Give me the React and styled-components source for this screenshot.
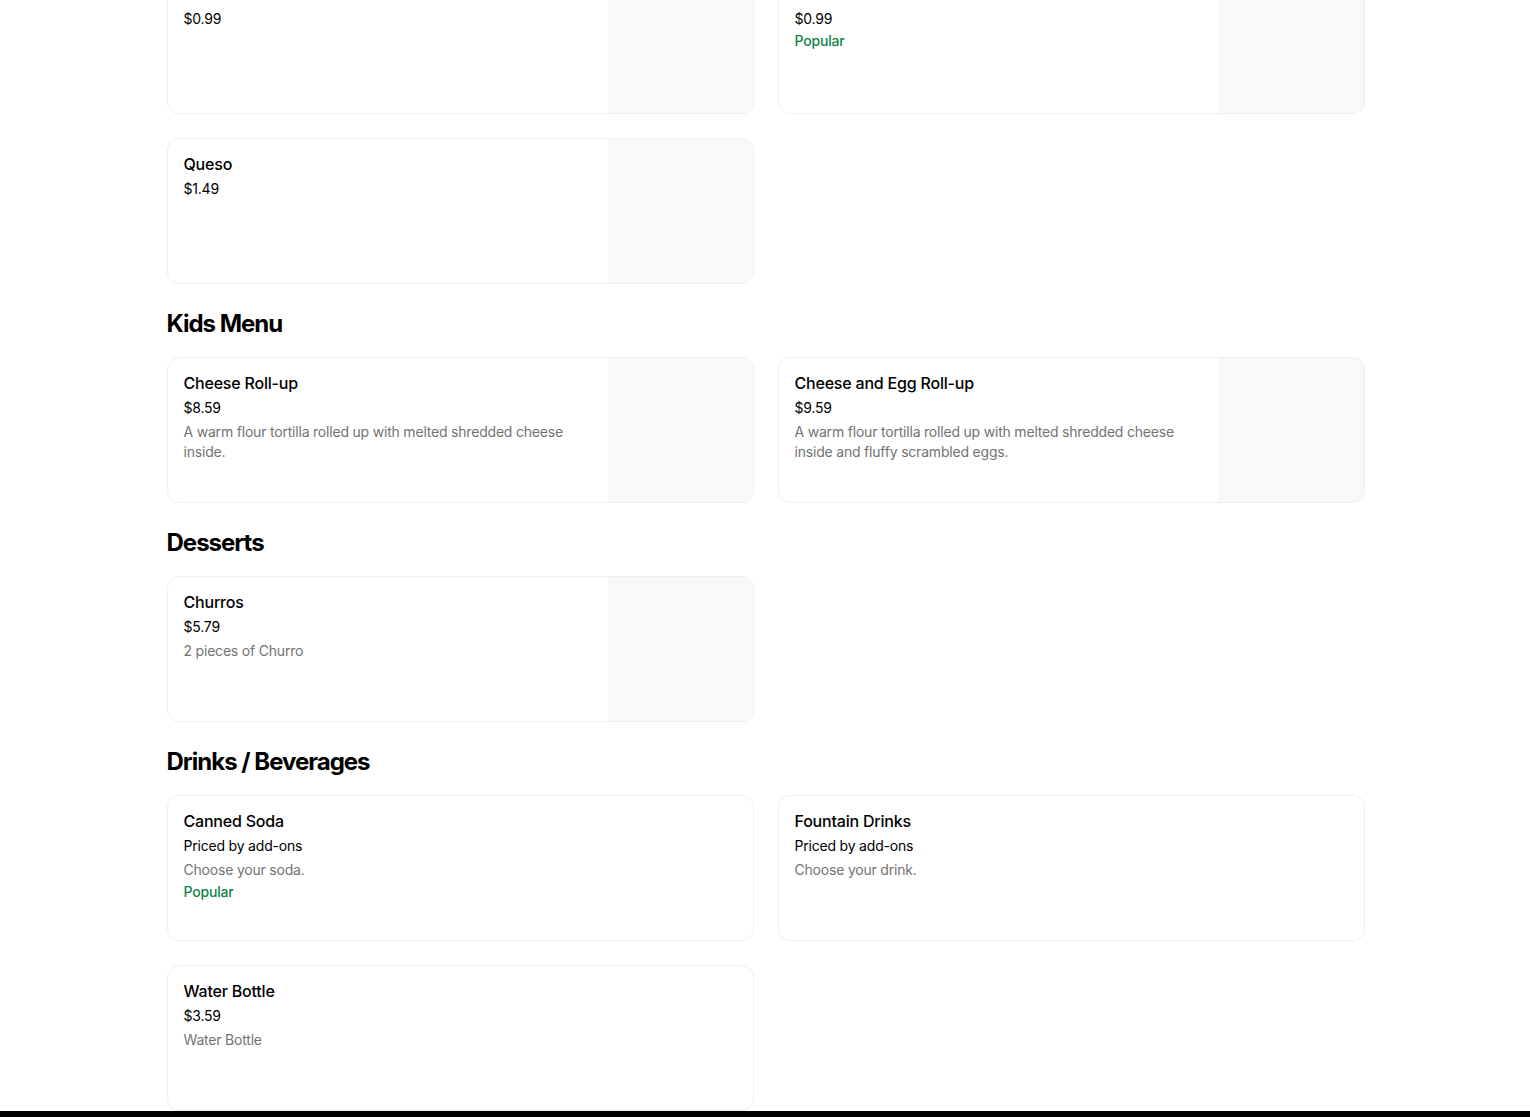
import React from "react";
import styled, { createGlobalStyle } from "styled-components";

const GlobalStyle = createGlobalStyle`
  * { box-sizing: border-box; }
  body {
    margin: 0;
    background: #ffffff;
    font-family: "Inter", "Liberation Sans", sans-serif;
    color: #000000;
    overflow: hidden;
  }
`;

const Page = styled.main`
  width: 1199px;
  padding-left: 1px;
  margin: -32px auto 0;
`;

const Section = styled.section`
  margin-bottom: 24px;

  &:last-child {
    margin-bottom: 0;
  }
`;

const SectionTitle = styled.h2`
  margin: 0 0 17px;
  font-size: 24px;
  line-height: 32px;
  font-weight: 700;
  letter-spacing: -1px;
  color: #000;
`;

const Grid = styled.div`
  display: grid;
  grid-template-columns: repeat(2, 1fr);
  gap: 24px;
`;

const Card = styled.div`
  display: flex;
  height: 146px;
  border: 1px solid #efefef;
  border-radius: 12px;
  overflow: hidden;
  background: #fff;
`;

const Info = styled.div`
  flex: 1;
  display: flex;
  flex-direction: column;
  gap: 4px;
  padding: 14px 16px 16px 16px;
  min-width: 0;
`;

const Name = styled.div`
  font-size: 16px;
  line-height: 22px;
  font-weight: 500;
  letter-spacing: -0.2px;
  color: #000;
`;

const Price = styled.div`
  font-size: 14px;
  line-height: 20px;
  letter-spacing: -0.2px;
  color: #000;
`;

const Desc = styled.div`
  font-size: 14px;
  line-height: 20px;
  letter-spacing: -0.2px;
  color: #737373;
  padding-right: 12px;
`;

const Badge = styled.div`
  margin-top: -2px;
  font-size: 14px;
  line-height: 20px;
  font-weight: 500;
  letter-spacing: -0.2px;
  color: #0e8345;
`;

const Thumb = styled.div`
  width: 145px;
  flex-shrink: 0;
  background: #f8f8f8;
`;

const Footer = styled.footer`
  height: 120px;
  background: #000;
`;

const sections = [
  {
    title: null,
    items: [
      { name: "Side of Salsa", price: "$0.99", image: true },
      { name: "Sour Cream", price: "$0.99", popular: true, image: true },
      { name: "Queso", price: "$1.49", image: true },
    ],
  },
  {
    title: "Kids Menu",
    items: [
      {
        name: "Cheese Roll-up",
        price: "$8.59",
        desc: "A warm flour tortilla rolled up with melted shredded cheese inside.",
        image: true,
      },
      {
        name: "Cheese and Egg Roll-up",
        price: "$9.59",
        desc: "A warm flour tortilla rolled up with melted shredded cheese inside and fluffy scrambled eggs.",
        image: true,
      },
    ],
  },
  {
    title: "Desserts",
    items: [
      { name: "Churros", price: "$5.79", desc: "2 pieces of Churro", image: true },
    ],
  },
  {
    title: "Drinks / Beverages",
    items: [
      {
        name: "Canned Soda",
        price: "Priced by add-ons",
        desc: "Choose your soda.",
        popular: true,
      },
      {
        name: "Fountain Drinks",
        price: "Priced by add-ons",
        desc: "Choose your drink.",
      },
      { name: "Water Bottle", price: "$3.59", desc: "Water Bottle" },
    ],
  },
];

function MenuItem({ item }) {
  return (
    <Card>
      <Info>
        <Name>{item.name}</Name>
        <Price>{item.price}</Price>
        {item.desc && <Desc>{item.desc}</Desc>}
        {item.popular && <Badge>Popular</Badge>}
      </Info>
      {item.image && <Thumb />}
    </Card>
  );
}

export default function App() {
  return (
    <>
      <GlobalStyle />
      <Page>
        {sections.map((s, i) => (
          <Section key={i}>
            {s.title && <SectionTitle>{s.title}</SectionTitle>}
            <Grid>
              {s.items.map((item) => (
                <MenuItem key={item.name} item={item} />
              ))}
            </Grid>
          </Section>
        ))}
      </Page>
      <Footer />
    </>
  );
}
